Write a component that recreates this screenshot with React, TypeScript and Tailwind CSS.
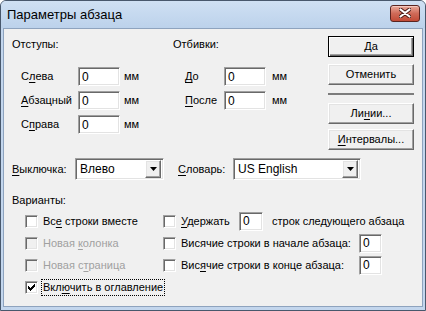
import React from 'react';

// classic 3D bevels
const SUNKEN =
  'bg-white border border-t-[#a0a0a0] border-l-[#a0a0a0] border-r-white border-b-white shadow-[inset_1px_1px_0_#696969,inset_-1px_-1px_0_#e3e3e3]';
const RAISED =
  'bg-[#f0f0f0] border border-t-white border-l-white border-r-[#696969] border-b-[#696969] shadow-[inset_-1px_-1px_0_#a0a0a0,inset_1px_1px_0_#e3e3e3]';
const RAISED_DEFAULT =
  'bg-[#f0f0f0] border border-black shadow-[inset_1px_1px_0_#fff,inset_-1px_-1px_0_#696969,inset_-2px_-2px_0_#a0a0a0]';

function U({ children }: { children: React.ReactNode }) {
  return <u className="underline-offset-[2px]">{children}</u>;
}

function Field({ value = '0', w }: { value?: string; w: string }) {
  return (
    <div className={`${SUNKEN} ${w} h-[19px] flex items-center pl-[3px] leading-none text-[12px]`}>{value}</div>
  );
}

function Btn({ children, def = false }: { children: React.ReactNode; def?: boolean }) {
  return (
    <div className={`${def ? RAISED_DEFAULT : RAISED} w-[86px] h-[21px] flex items-center justify-center`}>
      {children}
    </div>
  );
}

function Check({ checked = false, disabled = false }: { checked?: boolean; disabled?: boolean }) {
  return (
    <div
      className={`w-[13px] h-[13px] shrink-0 border border-t-[#a0a0a0] border-l-[#a0a0a0] border-r-white border-b-white shadow-[inset_1px_1px_0_#696969,inset_-1px_-1px_0_#e3e3e3] flex items-center justify-center ${
        disabled ? 'bg-[#f0f0f0]' : 'bg-white'
      }`}
    >
      {checked && (
        <svg width="7" height="7" viewBox="0 0 7 7">
          <path d="M0 2h1v1h1v1h1V3h1V2h1V1h1V0h1v3H6v1H5v1H4v1H3v1H2V6H1V5H0z" fill="#000" />
        </svg>
      )}
    </div>
  );
}

function Select({ value, w }: { value: string; w: string }) {
  return (
    <div className={`${SUNKEN} ${w} h-[22px] flex items-center justify-between pl-[4px] pr-[2px] text-[12px]`}>
      <span>{value}</span>
      <div className={`${RAISED} w-[16px] h-[18px] flex items-center justify-center`}>
        <svg width="7" height="4" viewBox="0 0 7 4">
          <path d="M0 0h7L3.5 4z" fill="#000" />
        </svg>
      </div>
    </div>
  );
}

export default function App() {
  return (
    <div className="w-[426px] h-[311px] bg-[#c3d6ed] border border-[#48586c] rounded-t-[6px] flex flex-col font-['Liberation_Sans',Arial,sans-serif] text-[11px] text-black overflow-hidden whitespace-nowrap">
      {/* Title bar */}
      <div className="h-[27px] flex items-center justify-between pl-[6px] pr-[5px] bg-gradient-to-b from-[#cfe0f3] to-[#bcd2eb]">
        <span className="text-[13px]">Параметры абзаца</span>
        <div className="w-[30px] h-[17px] -mt-[3px] rounded-[3px] border border-[#5a2420] bg-gradient-to-b from-[#e9a99b] via-[#cf6a58] to-[#c24a36] flex items-center justify-center shadow-[inset_0_1px_0_#f3c9bf]">
          <svg width="12" height="10" viewBox="0 0 12 10">
            <path d="M1.5 1.5l9 7M10.5 1.5l-9 7" stroke="#4a1b16" strokeWidth="4" strokeLinecap="round" />
            <path d="M1.5 1.5l9 7M10.5 1.5l-9 7" stroke="#fff" strokeWidth="2.2" strokeLinecap="round" />
          </svg>
        </div>
      </div>

      {/* Client area */}
      <div className="mx-[2px] mb-[3px] flex-1 bg-[#f0f0f0] border border-[#8ea3be]">
        <div className="flex">
          {/* Left block */}
          <div className="ml-[8px] w-[316px]">
            <div className="flex mt-[8px] h-[14px] leading-[14px]">
              <span className="w-[161px]">Отступы:</span>
              <span>Отбивки:</span>
            </div>
            <div className="flex mt-[16px]">
              <div className="w-[161px] flex flex-col gap-[5px]">
                {[
                  ['С', 'л', 'ева'],
                  ['', 'А', 'бзацный'],
                  ['С', 'п', 'рава'],
                ].map(([a, u, b], i) => (
                  <div key={i} className="flex items-center h-[19px] pl-[9px]">
                    <span className="w-[57px]">
                      {a}
                      <U>{u}</U>
                      {b}
                    </span>
                    <Field w="w-[42px]" />
                    <span className="ml-[4px]">мм</span>
                  </div>
                ))}
              </div>
              <div className="flex flex-col gap-[5px]">
                {[
                  ['', 'Д', 'о'],
                  ['', 'П', 'осле'],
                ].map(([a, u, b], i) => (
                  <div key={i} className="flex items-center h-[19px] pl-[12px]">
                    <span className="w-[39px]">
                      {a}
                      <U>{u}</U>
                      {b}
                    </span>
                    <Field w="w-[42px]" />
                    <span className="ml-[6px]">мм</span>
                  </div>
                ))}
              </div>
            </div>
          </div>

          {/* Buttons */}
          <div className="ml-auto mr-[8px] mt-[7px] flex flex-col">
            <Btn def>Да</Btn>
            <div className="mt-[7px]">
              <Btn>Отменить</Btn>
            </div>
            <div className="mt-[8px] h-[2px] bg-[#7c7c7c]" />
            <div className="mt-[8px]">
              <Btn>
                Ли<U>н</U>ии...
              </Btn>
            </div>
            <div className="mt-[5px]">
              <Btn>
                <U>И</U>нтервалы...
              </Btn>
            </div>
          </div>
        </div>

        {/* Selects */}
        <div className="flex items-center mt-[8px] ml-[8px] h-[22px]">
          <span className="w-[63px]">
            <U>В</U>ыключка:
          </span>
          <Select value="Влево" w="w-[89px]" />
          <span className="ml-[14px] w-[55px]">
            <U>С</U>ловарь:
          </span>
          <Select value="US English" w="w-[128px]" />
        </div>

        {/* Options */}
        <div className="mt-[13px] ml-[8px] h-[14px] leading-[14px]">Варианты:</div>
        <div className="mt-[3px] ml-[21px] flex flex-col">
          <div className="flex items-center h-[22px]">
            <div className="w-[138px] flex items-center gap-[5px]">
              <Check />
              <span>
                Вс<U>е</U> строки вместе
              </span>
            </div>
            <div className="flex items-center gap-[5px]">
              <Check />
              <span className="w-[53px]">
                <U>У</U>держать
              </span>
              <Field w="w-[24px]" />
              <span className="ml-[4px]">строк следующего абзаца</span>
            </div>
          </div>
          <div className="flex items-center h-[22px]">
            <div className="w-[138px] flex items-center gap-[5px] text-[#a0a0a0]">
              <Check disabled />
              <span>
                Новая <U>к</U>олонка
              </span>
            </div>
            <div className="flex items-center gap-[5px]">
              <Check />
              <span className="w-[173px]">Висячие строки в начале абзаца:</span>
              <Field w="w-[23px]" />
            </div>
          </div>
          <div className="flex items-center h-[22px]">
            <div className="w-[138px] flex items-center gap-[5px] text-[#a0a0a0]">
              <Check disabled />
              <span>
                Новая с<U>т</U>раница
              </span>
            </div>
            <div className="flex items-center gap-[5px]">
              <Check />
              <span className="w-[173px]">
                Вис<U>я</U>чие строки в конце абзаца:
              </span>
              <Field w="w-[23px]" />
            </div>
          </div>
          <div className="flex items-center h-[22px] gap-[3px]">
            <Check checked />
            <span className="border border-dotted border-black px-[1px] leading-[15px]">
              Вкл<U>ю</U>чить в оглавление
            </span>
          </div>
        </div>
      </div>
    </div>
  );
}
